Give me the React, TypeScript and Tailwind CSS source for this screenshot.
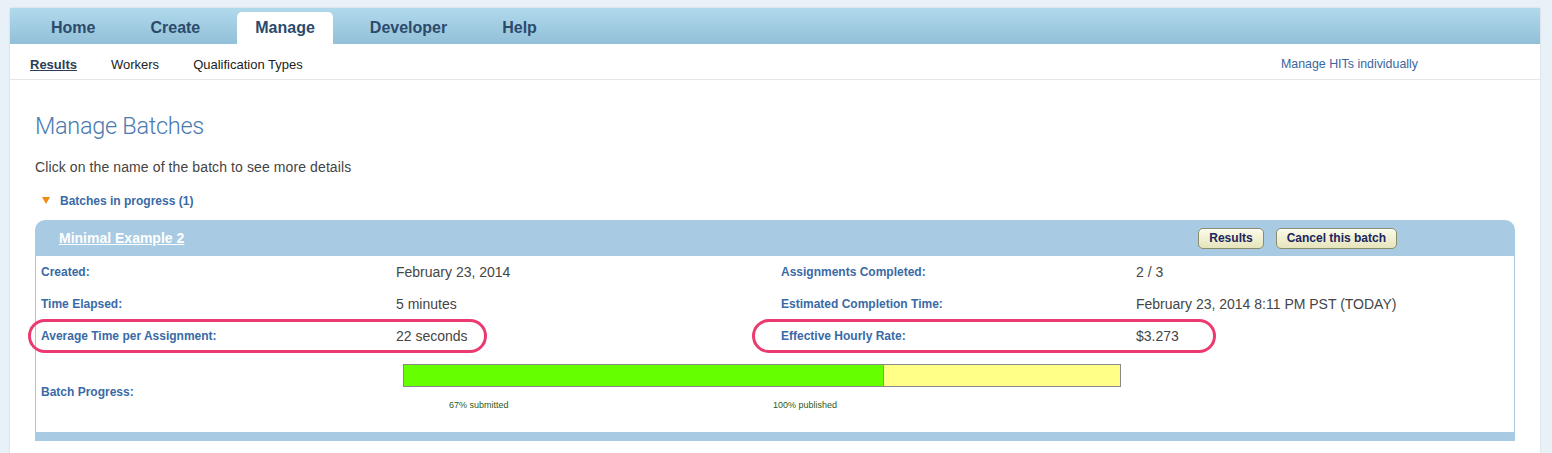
import React from "react";

const F = { fontFamily: '"Liberation Sans", Arial, sans-serif' };

function Tab({ label, active }: { label: string; active?: boolean }) {
  return (
    <div
      className={
        "h-[32px] px-[18px] flex items-center text-[16px] font-bold text-[#2c4a6b] rounded-t-[5px] " +
        (active ? "bg-white" : "")
      }
    >
      {label}
    </div>
  );
}

function Btn({ children }: { children: React.ReactNode }) {
  return (
    <button className="h-[21px] px-[10px] rounded-[5px] border border-[#8d8c6a] bg-gradient-to-b from-[#fbfbea] to-[#e6e4bb] text-[12px] font-bold text-[#1b2560] leading-none shadow-[inset_0_1px_0_#fff]">
      {children}
    </button>
  );
}

function Label({ children }: { children: React.ReactNode }) {
  return <div className="text-[12px] font-bold text-[#3a6aa6]">{children}</div>;
}
function Val({ children }: { children: React.ReactNode }) {
  return <div className="text-[14px] text-[#454545]">{children}</div>;
}

export default function App() {
  return (
    <div style={F} className="w-[1552px] h-[453px] bg-[#e8f1f7] pt-[8px] pl-[10px] pr-[12px] overflow-hidden">
      <div className="bg-white h-[445px] shadow-[0_0_2px_rgba(0,0,0,0.12)]">
        {/* main nav */}
        <div className="h-[36px] bg-gradient-to-b from-[#b0d9ec] to-[#92c0d8] flex items-end pl-[23px] gap-[19px]">
          <Tab label="Home" />
          <Tab label="Create" />
          <Tab label="Manage" active />
          <Tab label="Developer" />
          <Tab label="Help" />
        </div>
        {/* sub nav */}
        <div className="h-[36px] border-b border-[#e6e6e6] flex items-center justify-between pt-[6px] pl-[20px] pr-[122px]">
          <div className="flex items-center gap-[34px] text-[13px] text-[#222]">
            <span className="font-bold underline text-[#2c3e55]">Results</span>
            <span>Workers</span>
            <span>Qualification Types</span>
          </div>
          <span className="text-[12.4px] text-[#3c669c]">Manage HITs individually</span>
        </div>
        {/* content */}
        <div className="px-[25px]">
          <h1
            className="mt-[32px] text-[23.5px] leading-[28px] font-light text-[#4a7ab0] tracking-[-0.3px]"
            style={{ fontFamily: '"Helvetica Neue", Roboto, "Liberation Sans", sans-serif' }}
          >
            Manage Batches
          </h1>
          <p className="mt-[19px] text-[14px] leading-[16px] text-[#444] tracking-[0.1px]">
            Click on the name of the batch to see more details
          </p>
          <div className="mt-[11px] h-[30px] flex items-center pl-[7px] gap-[10px]">
            <svg width="8" height="8" viewBox="0 0 8 8">
              <polygon points="0,0 8,0 4,7" fill="#f08c10" />
            </svg>
            <span className="text-[12px] font-bold text-[#3a6aa6]">Batches in progress (1)</span>
          </div>
          {/* batch box */}
          <div className="relative mt-[4px]">
            <div className="h-[36px] bg-[#a8cbe3] rounded-t-[10px] flex items-center justify-between pl-[24px] pr-[118px]">
              <span className="text-[14px] font-bold text-white underline">Minimal Example 2</span>
              <div className="flex items-center gap-[12px]">
                <Btn>Results</Btn>
                <Btn>Cancel this batch</Btn>
              </div>
            </div>
            <div className="border-x border-[#aac4da] pl-[5px] grid grid-cols-[355px_385px_355px_1fr]">
              <div className="h-[32px] flex items-center"><Label>Created:</Label></div>
              <div className="h-[32px] flex items-center"><Val>February 23, 2014</Val></div>
              <div className="h-[32px] flex items-center"><Label>Assignments Completed:</Label></div>
              <div className="h-[32px] flex items-center"><Val>2 / 3</Val></div>

              <div className="h-[32px] flex items-center"><Label>Time Elapsed:</Label></div>
              <div className="h-[32px] flex items-center"><Val>5 minutes</Val></div>
              <div className="h-[32px] flex items-center"><Label>Estimated Completion Time:</Label></div>
              <div className="h-[32px] flex items-center"><Val>February 23, 2014 8:11 PM PST (TODAY)</Val></div>

              <div className="h-[32px] flex items-center"><Label>Average Time per Assignment:</Label></div>
              <div className="h-[32px] flex items-center"><Val>22 seconds</Val></div>
              <div className="h-[32px] flex items-center"><Label>Effective Hourly Rate:</Label></div>
              <div className="h-[32px] flex items-center"><Val>$3.273</Val></div>

              <div className="h-[80px] flex items-center"><Label>Batch Progress:</Label></div>
              <div className="col-span-3 h-[80px] pl-[7px] pt-[12px]">
                <div className="w-[718px] h-[23px] border border-[#8a8a8a] flex">
                  <div className="w-[480px] h-full bg-[#66ff00] border-r border-[#8a9a7a]" />
                  <div className="flex-1 h-full bg-[#ffff88]" />
                </div>
                <div className="mt-[13px] flex text-[9px] text-[#2d5a23] leading-[11px]">
                  <span className="ml-[46px] w-[324px]">67% submitted</span>
                  <span>100% published</span>
                </div>
              </div>
            </div>
            <div className="h-[9px] bg-[#a8cbe3]" />

            {/* highlight ovals */}
            <div className="absolute left-[-7px] top-[99px] w-[459px] h-[34px] border-[3px] border-[#ec3a70] rounded-[17px] pointer-events-none" />
            <div className="absolute left-[717px] top-[99px] w-[464px] h-[34px] border-[3px] border-[#ec3a70] rounded-[17px] pointer-events-none" />
          </div>
        </div>
      </div>
    </div>
  );
}
